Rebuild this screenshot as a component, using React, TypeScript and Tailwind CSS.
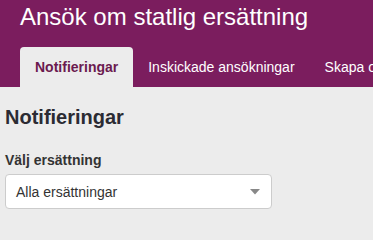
import React from 'react';

const tabs = ['Notifieringar', 'Inskickade ansökningar', 'Skapa och hantera ansökan'];

export default function App() {
  return (
    <div
      className="min-h-screen w-full overflow-hidden bg-[#ececec]"
      style={{ fontFamily: '"Liberation Sans", Arial, sans-serif' }}
    >
      <header className="bg-[#7b1d5e] pl-5">
        <h1 className="pt-[5px] text-[24px] leading-[24px] text-white whitespace-nowrap">
          Ansök om statlig ersättning
        </h1>
        <nav className="mt-[18px] flex whitespace-nowrap">
          {tabs.map((t, i) => (
            <div
              key={t}
              className={
                i === 0
                  ? 'flex h-10 items-center rounded-t-[4px] bg-[#ececec] px-[15px] text-[14px] font-bold text-[#6b1a4f]'
                  : 'flex h-10 items-center px-[15px] text-[14px] text-white'
              }
            >
              {t}
            </div>
          ))}
        </nav>
      </header>
      <main className="px-[5px]">
        <h2 className="mt-[19px] text-[20px] leading-[22px] font-bold text-[#2b2b33]">Notifieringar</h2>
        <label className="mt-[22px] block text-[14px] leading-[20px] font-bold text-[#333333]">
          Välj ersättning
        </label>
        <div className="mt-1 flex h-[35px] w-[267px] items-center justify-between rounded-[4px] border border-[#cccccc] bg-white pl-[10px] pr-[11px]">
          <span className="text-[14px] leading-[20px] text-[#333333]">Alla ersättningar</span>
          <svg width="10" height="6" viewBox="0 0 10 6">
            <path d="M0 0 L10 0 L5 5.5 Z" fill="#888888" />
          </svg>
        </div>
      </main>
    </div>
  );
}
